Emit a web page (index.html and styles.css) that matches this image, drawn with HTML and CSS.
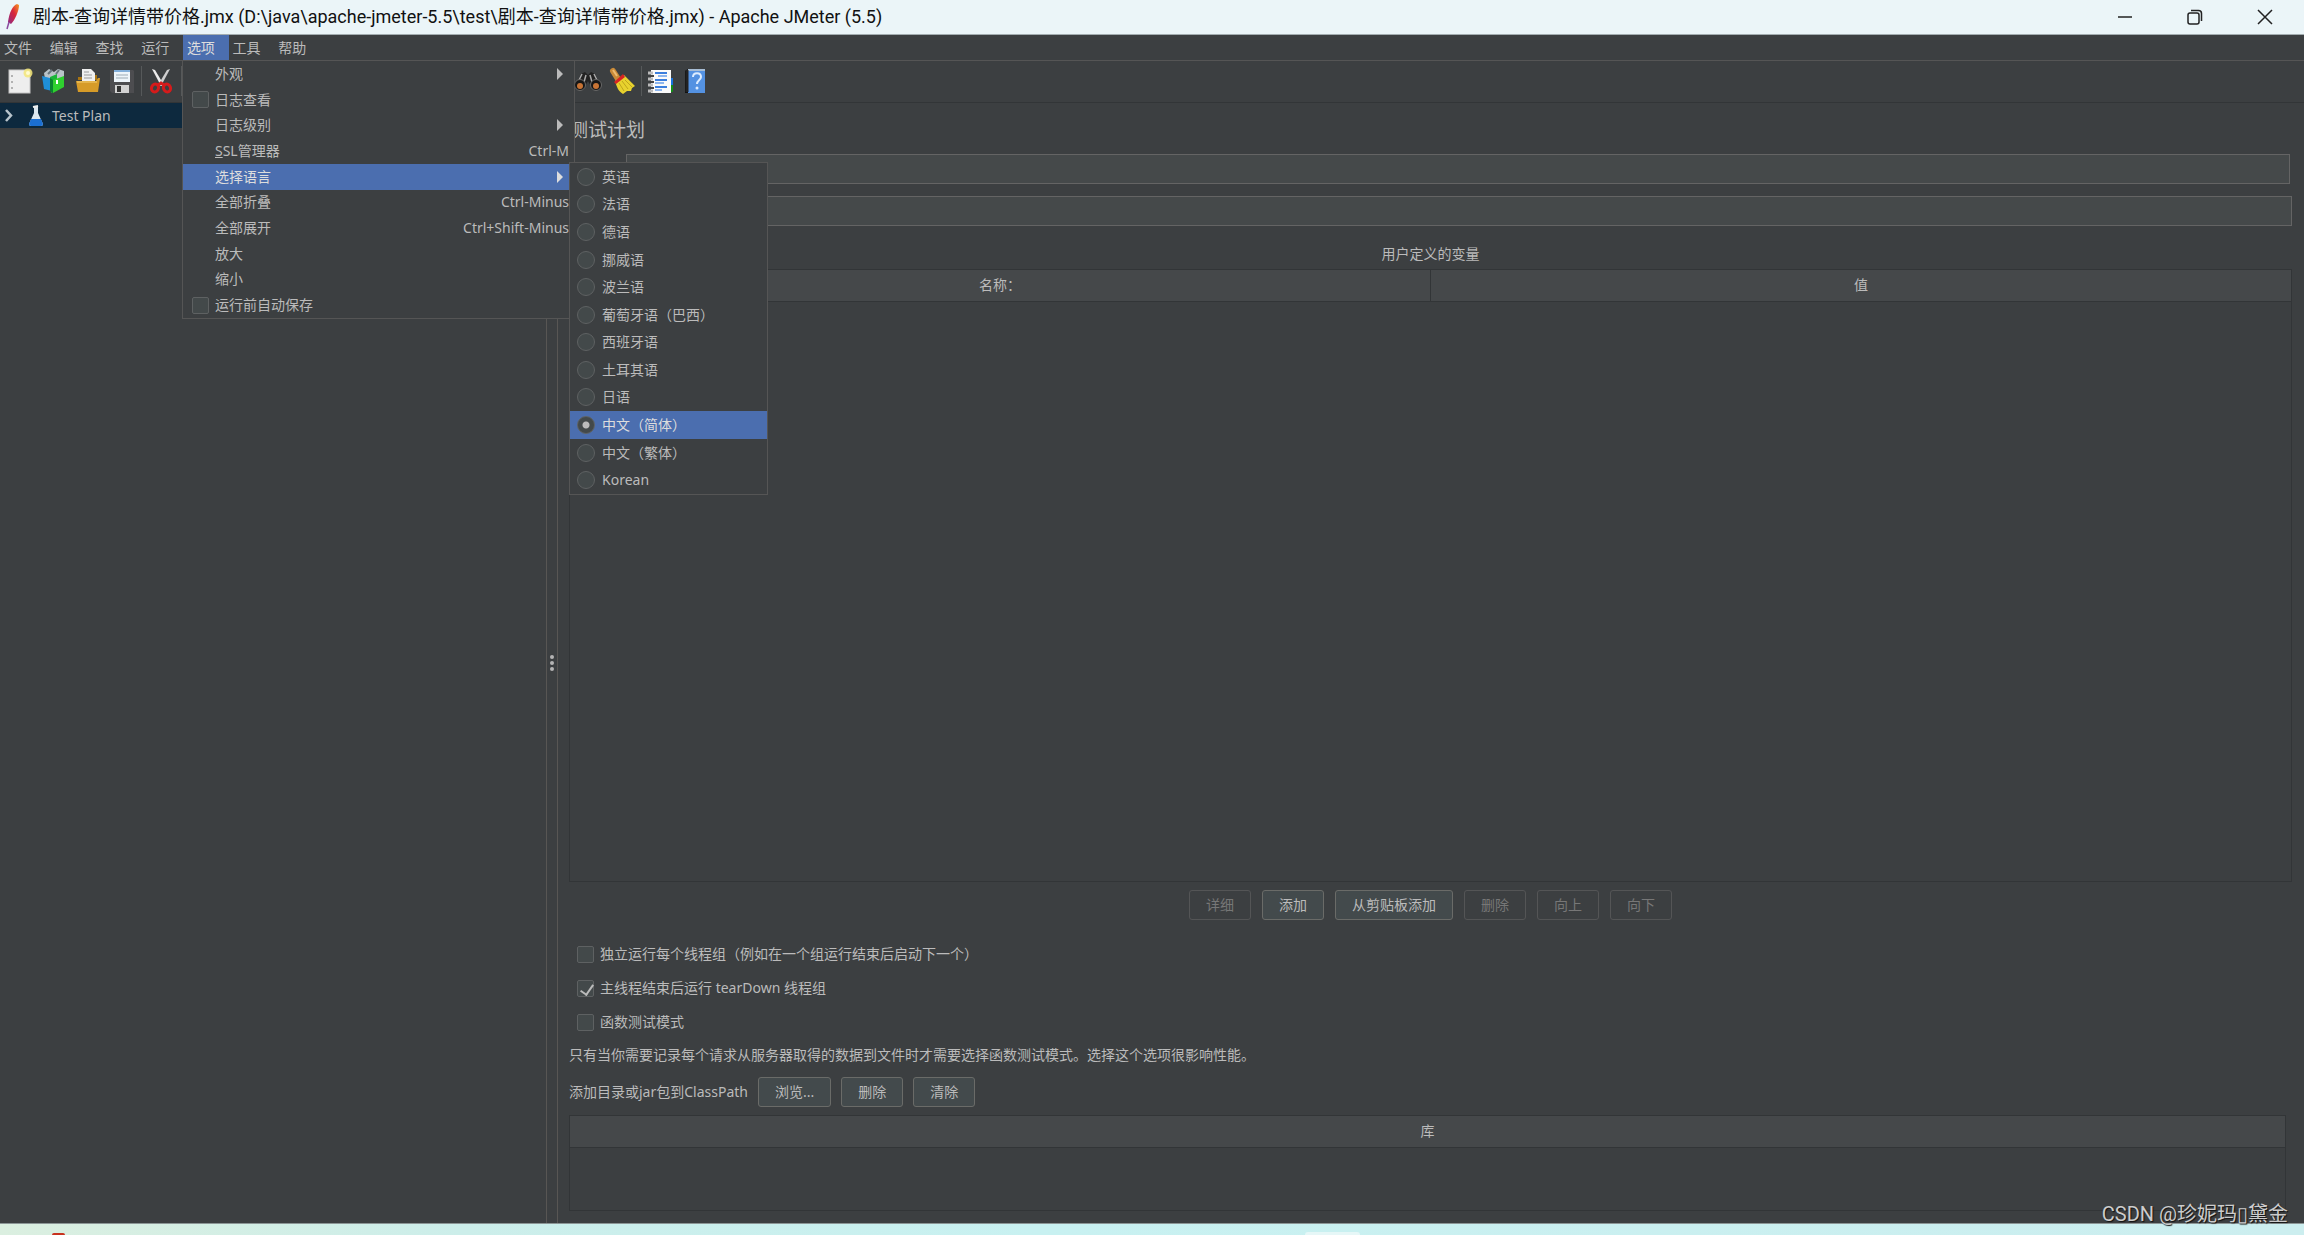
FILE: index.html
```html
<!DOCTYPE html>
<html lang="zh-CN">
<head>
<meta charset="utf-8">
<title>Apache JMeter (5.5)</title>
<link rel="stylesheet" href="styles.css">
</head>
<body>
<div class="window">
  <header class="titlebar">
    <svg class="feather" width="16" height="28" viewBox="0 0 16 28"><defs><linearGradient id="fg" x1="1" y1="0" x2="0" y2="1"><stop offset="0" stop-color="#f79a23"/><stop offset=".45" stop-color="#d9263a"/><stop offset="1" stop-color="#8a2a86"/></linearGradient></defs><path d="M12 1C8 2 4 10 3 19l3 2C10 17 14 8 14 2z" fill="url(#fg)"/><path d="M4 19l-2 7" stroke="#8a4ba0" stroke-width="1.5"/></svg>
    <span class="title">剧本-查询详情带价格.jmx (D:\java\apache-jmeter-5.5\test\剧本-查询详情带价格.jmx) - Apache JMeter (5.5)</span>
    <div class="controls">
      <button aria-label="最小化"><svg width="16" height="16" viewBox="0 0 16 16"><path d="M1 8h14"/></svg></button>
      <button aria-label="还原"><svg width="16" height="16" viewBox="0 0 16 16"><rect x="1" y="4" width="11" height="11" rx="2"/><path d="M4 1.500h7.500a3 3 0 0 1 3 3V12"/></svg></button>
      <button aria-label="关闭"><svg width="16" height="16" viewBox="0 0 16 16"><path d="M1 1l14 14M15 1L1 15"/></svg></button>
    </div>
  </header>

  <nav class="menubar">
    <div class="menus">
      <button>文件</button><button>编辑</button><button>查找</button><button>运行</button><button class="open">选项</button><button>工具</button><button>帮助</button>
    </div>
    <div class="dropdown">
      <button class="item"><span>外观</span><i class="arrow"></i></button>
      <label class="item check"><input type="checkbox"><span>日志查看</span></label>
      <button class="item"><span>日志级别</span><i class="arrow"></i></button>
      <button class="item"><span><u>S</u>SL管理器</span><kbd>Ctrl-M</kbd></button>
      <button class="item active"><span>选择语言</span><i class="arrow"></i></button>
      <button class="item"><span>全部折叠</span><kbd>Ctrl-Minus</kbd></button>
      <button class="item"><span>全部展开</span><kbd>Ctrl+Shift-Minus</kbd></button>
      <button class="item"><span>放大</span></button>
      <button class="item"><span>缩小</span></button>
      <label class="item check"><input type="checkbox"><span>运行前自动保存</span></label>
    </div>
    <div class="submenu">
      <label><input type="radio" name="lang">英语</label>
      <label><input type="radio" name="lang">法语</label>
      <label><input type="radio" name="lang">德语</label>
      <label><input type="radio" name="lang">挪威语</label>
      <label><input type="radio" name="lang">波兰语</label>
      <label><input type="radio" name="lang">葡萄牙语（巴西）</label>
      <label><input type="radio" name="lang">西班牙语</label>
      <label><input type="radio" name="lang">土耳其语</label>
      <label><input type="radio" name="lang">日语</label>
      <label class="active"><input type="radio" name="lang" checked>中文（简体）</label>
      <label><input type="radio" name="lang">中文（繁体）</label>
      <label><input type="radio" name="lang">Korean</label>
    </div>
  </nav>

  <div class="toolbar">
    <div class="tools">
      <button aria-label="新建"><svg width="26" height="26" viewBox="0 0 26 26"><rect x="2" y="2" width="21" height="23" fill="#eee" stroke="#c4c4c4"/><path d="M5 7v2M5 13v2M5 19v2" stroke="#777"/><circle cx="21" cy="5" r="4.500" fill="#f3e679" opacity=".85"/><circle cx="21" cy="5" r="2" fill="#fffbd0"/></svg></button>
      <button aria-label="模板"><svg width="26" height="26" viewBox="0 0 26 26"><path d="M3 5l5-4 5 3 4-3 6 2v8H4z" fill="#b9c3c8"/><path d="M7 6l4-4M15 6l3-4" stroke="#68777f" stroke-width="2"/><path d="M1 8l8 2 2 13-8-2z" fill="#1f8fd8"/><path d="M9 9l7-3v16l-6 3z" fill="#19b43a"/><path d="M12 12l11-4v11l-11 6z" fill="#2fd02f"/><path d="M12 12v13l-3-2V10z" fill="#0b8130"/><path d="M16 12v4" stroke="#fff" stroke-width="2"/></svg></button>
      <button aria-label="打开"><svg width="26" height="26" viewBox="0 0 26 26"><path d="M3 9h5v-2h14v5H3z" fill="#a77413"/><path d="M7 13V1h9l4 4v8z" fill="#efefef"/><path d="M9 4h5M9 7h8M9 10h8" stroke="#999"/><path d="M1 13h20l2-3h2l-2 14H3z" fill="#d69b28"/><path d="M2 14h20" stroke="#f4ce70"/></svg></button>
      <button aria-label="保存"><svg width="26" height="26" viewBox="0 0 26 26"><path d="M1 2h23l1 1v22H3l-2-2z" fill="#4d4d50"/><rect x="5" y="2" width="16" height="12" fill="#edf4fa"/><path d="M5 3h16" stroke="#82aeda" stroke-width="2"/><path d="M7 7h12M7 10h12" stroke="#9caab5"/><rect x="6" y="17" width="14" height="8" fill="#d2d2d2"/><rect x="8" y="18" width="4" height="6" fill="#333"/></svg></button>
      <i class="sep"></i>
      <button aria-label="剪切"><svg width="26" height="26" viewBox="0 0 26 26"><path d="M4 1l3 1 9 15-3 1z" fill="#ececec"/><path d="M22 1l-3 1-9 15 3 1z" fill="#cfcfcf"/><g fill="none" stroke="#d51b1b" stroke-width="3"><ellipse cx="7" cy="20" rx="3.500" ry="4" transform="rotate(25 7 20)"/><ellipse cx="19" cy="20" rx="3.500" ry="4" transform="rotate(-25 19 20)"/><path d="M10 17l3-2 3 2"/></g></svg></button>
      <i class="sep edge"></i>
    </div>
    <div class="tools">
      <button aria-label="搜索"><svg width="28" height="26" viewBox="0 0 28 26"><path d="M7 6l4-2 3 3 3-3 4 2 6 12-8 4-5-9-5 9-8-4z" fill="#222"/><path d="M8 6L4 14M20 6l4 8M12 7l-2 7M16 7l2 7" stroke="#aaa" stroke-width="1.500"/><circle cx="6" cy="17" r="5.500" fill="#171717" stroke="#686868"/><circle cx="22" cy="17" r="5.500" fill="#171717" stroke="#686868"/><circle cx="6" cy="18" r="3" fill="#c87435"/><circle cx="22" cy="18" r="3" fill="#c87435"/></svg></button>
      <button aria-label="清除搜索"><svg width="28" height="28" viewBox="0 0 28 28"><path d="M5 4l5 8" stroke="#c98a38" stroke-width="6" stroke-linecap="round"/><path d="M5 3l4 6" stroke="#edbb70" stroke-width="2"/><path d="M7 14l9-6 11 11-3 2-1 3-4 0-4 3C10 24 9 20 7 14z" fill="#e8d22e"/><path d="M11 16l5 8M14 14l6 8M17 13l7 7" stroke="#bfa51c"/><path d="M6 15l9-8 2 3-9 7z" fill="#d72323"/></svg></button>
      <i class="sep"></i>
      <button aria-label="函数助手"><svg width="28" height="26" viewBox="0 0 28 26"><rect x="21" y="10" width="5" height="7" fill="#1672dc"/><rect x="21" y="17" width="5" height="7" fill="#128d16"/><rect x="4" y="2" width="20" height="23" fill="#fafafa"/><path d="M8 5h12M8 12h12M8 19h12" stroke="#3b7edd" stroke-width="2"/><path d="M11 8h9M8 15h9M8 22h7" stroke="#8eb6ee" stroke-width="2"/><path d="M1 5h5M1 11h5M1 17h5M1 23h5" stroke="#bbb" stroke-width="3"/><path d="M4 8h3M4 14h3M4 20h3" stroke="#444" stroke-width="2"/></svg></button>
      <button aria-label="帮助"><svg width="26" height="26" viewBox="0 0 26 26"><path d="M3 3l3-2v24H3z" fill="#111"/><rect x="6" y="1" width="17" height="24" fill="#5492e2"/><path d="M6 2h17" stroke="#a7bdd5" stroke-width="2"/><path d="M5 2v22" stroke="#222" stroke-width="3"/><path d="M11 9c0-5 8-5 8 0 0 3-4 3-4 7" fill="none" stroke="#dcecff" stroke-width="2"/><circle cx="15" cy="20" r="1.500" fill="#dcecff"/></svg></button>
    </div>
  </div>

  <main class="workspace">
    <aside class="tree">
      <div class="node">
        <svg width="12" height="14" viewBox="0 0 12 14"><path d="M2 1l5 5.500L2 12" fill="none" stroke="#b8c4cc" stroke-width="2.500"/></svg>
        <svg class="flask" width="16" height="22" viewBox="0 0 16 22"><path d="M6 2h4v6l5 11q0 2-2 2H3q-2 0-2-2L6 8z" fill="#dce8f0"/><path d="M3 14h10l2 5q0 2-2 2H3q-2 0-2-2z" fill="#1b6fd2"/><path d="M5 2l5-1" stroke="#eee" stroke-width="2"/></svg>
        <span>Test Plan</span>
      </div>
    </aside>
    <div class="splitter"><i></i><i></i><i></i></div>
    <section class="panel">
      <h1>测试计划</h1>
      <input class="field name" type="text" aria-label="名称">
      <input class="field" type="text" aria-label="注释">
      <div class="caption">用户定义的变量</div>
      <div class="grid vars"><table><thead><tr><th>名称：</th><th>值</th></tr></thead></table></div>
      <div class="actions">
        <button class="btn" disabled>详细</button><button class="btn">添加</button><button class="btn">从剪贴板添加</button><button class="btn" disabled>删除</button><button class="btn" disabled>向上</button><button class="btn" disabled>向下</button>
      </div>
      <div class="options">
        <label><input type="checkbox">独立运行每个线程组（例如在一个组运行结束后启动下一个）</label>
        <label><input type="checkbox" checked>主线程结束后运行 tearDown 线程组</label>
        <label><input type="checkbox">函数测试模式</label>
      </div>
      <p>只有当你需要记录每个请求从服务器取得的数据到文件时才需要选择函数测试模式。选择这个选项很影响性能。</p>
      <div class="classpath"><span>添加目录或jar包到ClassPath</span><button class="btn">浏览...</button><button class="btn">删除</button><button class="btn">清除</button></div>
      <div class="grid lib"><table><thead><tr><th>库</th></tr></thead></table></div>
    </section>
  </main>
  <footer class="taskbar"><i class="app"></i><i class="tab"></i></footer>
  <div class="watermark">CSDN @珍妮玛▯黛金</div>
</div>
</body>
</html>
```
FILE: styles.css
```css
* { box-sizing: border-box; }
body {
  margin: 0;
  background: #3c3f41;
  color: #bbb;
  font: 14px/20px "Noto Sans", "Noto Sans CJK SC", sans-serif;
}
button { font: inherit; color: inherit; background: none; border: 0; padding: 0; }
i { display: block; }
.window { position: relative; display: flex; flex-direction: column; height: 100vh; overflow: hidden; }

.titlebar {
  display: flex;
  align-items: center;
  height: 35px;
  padding-left: 5px;
  background: #ebf5f8;
  border-bottom: 1px solid #a3adb0;
  color: #111;
  font-family: Roboto, "Noto Sans CJK SC", sans-serif;
  font-size: 18px;
}
.title { flex: 1; margin-left: 12px; white-space: nowrap; }
.controls { display: flex; padding-right: 4px; }
.controls button { display: flex; justify-content: center; align-items: center; width: 70px; height: 34px; }
.controls svg { fill: none; stroke: #222; stroke-width: 1.5; }

.menubar { position: relative; z-index: 2; height: 26px; border-bottom: 1px solid #555; }
.menus { display: flex; width: 320px; height: 25px; }
.menus button { flex: 1; padding: 0 0 0 4px; text-align: left; }
.menus .open { background: #4b6eaf; color: #ddd; }

.dropdown {
  position: absolute;
  left: 182px;
  top: 25px;
  display: flex;
  flex-direction: column;
  width: 393px;
  height: 259px;
  background: #3c3f41;
  border: 1px solid #555;
}
.item { flex: 1; display: flex; align-items: center; justify-content: space-between; margin-right: 5px; padding-left: 32px; }
.item.check { justify-content: flex-start; gap: 6px; padding-left: 9px; }
.item.active, .submenu .active { background: #4b6eaf; color: #ddd; }
.arrow { margin-right: 6px; border: 6px solid transparent; border-left-color: #bbb; border-right: 0; }
.active .arrow { border-left-color: #ddd; }
kbd { font: inherit; }

.submenu {
  position: absolute;
  left: 569px;
  top: 127px;
  display: flex;
  flex-direction: column;
  width: 199px;
  height: 333px;
  background: #3c3f41;
  border: 1px solid #555;
}
.submenu label { flex: 1; display: flex; align-items: center; gap: 7px; padding-left: 7px; }

input { margin: 0; }
input[type=checkbox], input[type=radio] {
  appearance: none;
  flex: none;
  width: 17px;
  height: 17px;
  border: 1px solid #5e6162;
  border-radius: 2px;
  background: #43494a;
}
input[type=radio] { width: 18px; height: 18px; border-radius: 50%; }
input[type=radio]:checked { background: radial-gradient(circle, #bbb 0 3px, #43494a 4px); }
input[type=checkbox]:checked { position: relative; }
input[type=checkbox]:checked::after {
  content: "";
  position: absolute;
  left: 5px;
  top: 1px;
  width: 6px;
  height: 11px;
  border: solid #bbb;
  border-width: 0 2px 2px 0;
  transform: rotate(35deg);
}

.toolbar { display: flex; height: 42px; border-bottom: 1px solid #323537; }
.tools { display: flex; align-items: center; width: 568px; padding: 0 0 2px 3px; }
.tools button { display: flex; justify-content: center; align-items: center; width: 34px; height: 34px; }
.sep { width: 1px; height: 30px; margin: 0 2px; background: #56595a; }
.edge { margin-left: 3px; }

.workspace { flex: 1; display: flex; min-height: 0; }
.tree { width: 546px; }
.node { display: flex; align-items: center; height: 25px; padding-left: 4px; background: #0d293e; }
.flask { margin: 0 8px 0 12px; }
.splitter {
  display: flex;
  flex-direction: column;
  align-items: center;
  justify-content: center;
  gap: 2px;
  width: 12px;
  border: solid #585654;
  border-width: 0 1px;
}
.splitter i { width: 4px; height: 4px; border-radius: 50%; background: #b4b4b4; }

.panel { flex: 1; display: flex; flex-direction: column; padding: 13px 12px 12px 11px; }
h1 { margin: 0 0 10px; font-size: 19px; line-height: 28px; font-weight: 400; }
.field { height: 30px; margin-left: 44px; border: 1px solid #646464; background: #45494a; color: #bbb; }
.field.name { margin: 0 2px 12px 57px; }
.caption { margin: 18px 0 5px; text-align: center; }
.grid { border: 1px solid #323537; }
.vars { flex: 1; }
table { width: 100%; table-layout: fixed; border-collapse: collapse; }
th { height: 31px; padding: 0; font-weight: 400; background: #45484a; border-bottom: 1px solid #323537; }
th + th { border-left: 1px solid #323537; }
.actions { display: flex; justify-content: center; gap: 11px; margin: 8px 0 24px; }
.btn { height: 30px; padding: 0 16px; border: 1px solid #6a6b68; border-radius: 3px; background: #434a4c; }
.btn:disabled { color: #777; background: none; border-color: #545556; }
.options { display: flex; flex-direction: column; gap: 14px; padding-left: 8px; }
.options label { display: flex; align-items: center; gap: 6px; }
p { margin: 13px 0 12px; }
.classpath { display: flex; align-items: center; gap: 10px; margin-bottom: 8px; }
.lib { height: 96px; margin-right: 6px; }

.taskbar {
  display: flex;
  align-items: flex-end;
  gap: 1240px;
  height: 12px;
  padding-left: 52px;
  border-top: 1px solid #8c9696;
  background: linear-gradient(90deg, #dbefe0, #cceeea 20%, #c8f1f1 45%, #cceeef);
}
.app { width: 13px; height: 2px; border-radius: 6px 6px 0 0; background: #c8321e; }
.tab { width: 55px; height: 3px; border-radius: 3px 3px 0 0; background: #e6f7f7; }
.watermark {
  position: absolute;
  right: 16px;
  bottom: 7px;
  color: #ccc;
  font: 20px/28px Roboto, "Noto Sans CJK SC", sans-serif;
  text-shadow: 1px 1px 1px #111;
}
```
